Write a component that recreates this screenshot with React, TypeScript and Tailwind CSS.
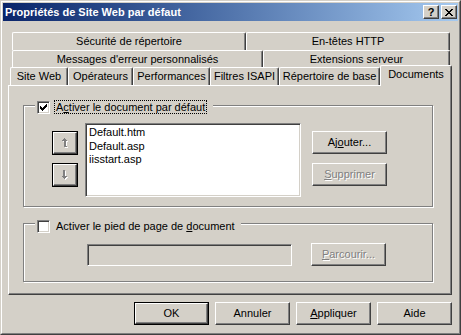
import type { ReactNode } from 'react';

type TabProps = { label: string; w: string; h?: string; selected?: boolean };

function Tab({ label, w, selected = false }: TabProps) {
  return (
    <div
      className={`${w} ${
        selected ? 'h-[21px] -mb-px relative z-10 pb-[3px]' : 'h-[18px]'
      } flex items-center justify-center bg-[#d4d0c8] border-t border-l border-r border-t-white border-l-white border-r-[#404040] rounded-t-[2px] shadow-[inset_-1px_0_0_#808080] whitespace-nowrap`}
    >
      {label}
    </div>
  );
}

function Button({
  children,
  disabled = false,
  isDefault = false,
}: {
  children: ReactNode;
  disabled?: boolean;
  isDefault?: boolean;
}) {
  const text = disabled ? 'text-[#808080] [text-shadow:1px_1px_0_#ffffff]' : 'text-black';
  if (isDefault) {
    return (
      <div className="w-[75px] h-[23px] border border-black">
        <div
          className={`h-full flex items-center justify-center border border-t-white border-l-white border-r-[#404040] border-b-[#404040] shadow-[inset_-1px_-1px_0_#808080] ${text}`}
        >
          <span>{children}</span>
        </div>
      </div>
    );
  }
  return (
    <div
      className={`w-[75px] h-[23px] flex items-center justify-center border border-t-white border-l-white border-r-[#404040] border-b-[#404040] shadow-[inset_-1px_-1px_0_#808080] ${text}`}
    >
      <span>{children}</span>
    </div>
  );
}

function Checkbox({ checked }: { checked: boolean }) {
  return (
    <div className="w-[13px] h-[13px] shrink-0 bg-white border border-t-[#808080] border-l-[#808080] border-r-white border-b-white shadow-[inset_1px_1px_0_#404040,inset_-1px_-1px_0_#d4d0c8] flex items-center justify-center">
      {checked && (
        <svg width="7" height="7" viewBox="0 0 7 7" shapeRendering="crispEdges">
          <path
            d="M6 0h1v1h-1z M5 1h2v1h-2z M0 2h1v1h-1z M4 2h3v1h-3z M0 3h2v1h-2z M3 3h3v1h-3z M0 4h5v1h-5z M1 5h3v1h-3z M2 6h1v1h-1z"
            fill="#000"
          />
        </svg>
      )}
    </div>
  );
}

function ArrowButton({ down = false }: { down?: boolean }) {
  // grayed bitmap arrow (disabled)
  const up = 'M3 0h1v1h-1z M2 1h3v1h-3z M1 2h5v1h-5z M3 3h2v6h-2z M4 8h2v1h-2z';
  const dn = 'M2 0h2v1h-2z M2 1h2v6h-2z M1 6h5v1h-5z M2 7h3v1h-3z M3 8h1v1h-1z';
  const d = down ? dn : up;
  return (
    <div className="w-[26px] h-[24px] border border-black">
      <div className="h-full flex items-center justify-center border border-t-white border-l-white border-r-[#404040] border-b-[#404040] shadow-[inset_-1px_-1px_0_#808080]">
        <svg width="8" height="10" viewBox="0 0 8 10" shapeRendering="crispEdges">
          <path d={d} fill="#ffffff" transform="translate(1 1)" />
          <path d={d} fill="#808080" />
        </svg>
      </div>
    </div>
  );
}

function GroupBox({ h, children }: { h: string; children: ReactNode }) {
  return (
    <div
      className={`relative w-[410px] ${h} border border-[#808080] shadow-[inset_1px_1px_0_#ffffff,1px_1px_0_#ffffff]`}
    >
      {children}
    </div>
  );
}

export default function App() {
  return (
    <div className="w-[461px] h-[335px] bg-[#d4d0c8] border border-t-[#d4d0c8] border-l-[#d4d0c8] border-r-[#404040] border-b-[#404040] font-['Liberation_Sans',Arial,sans-serif] text-[11px] text-black select-none overflow-hidden">
      <div className="h-full border border-t-white border-l-white border-r-[#808080] border-b-[#808080] p-px flex flex-col">
        {/* title bar */}
        <div className="h-[18px] shrink-0 flex items-center bg-linear-to-r from-[#0a246a] to-[#a6caf0] pl-[2px] pr-[1px]">
          <span className="font-bold text-white text-[11px]">Propriétés de Site Web par défaut</span>
          <div className="ml-auto flex gap-[2px]">
            <div className="w-[16px] h-[14px] bg-[#d4d0c8] border border-t-white border-l-white border-r-[#404040] border-b-[#404040] shadow-[inset_-1px_-1px_0_#808080] flex items-center justify-center font-bold text-[11px] leading-none">
              ?
            </div>
            <div className="w-[16px] h-[14px] bg-[#d4d0c8] border border-t-white border-l-white border-r-[#404040] border-b-[#404040] shadow-[inset_-1px_-1px_0_#808080] flex items-center justify-center">
              <svg width="8" height="7" viewBox="0 0 8 7" shapeRendering="crispEdges">
                <path
                  d="M0 0h2v1h-2z M6 0h2v1h-2z M1 1h2v1h-2z M5 1h2v1h-2z M2 2h4v1h-4z M3 3h2v1h-2z M2 4h4v1h-4z M1 5h2v1h-2z M5 5h2v1h-2z M0 6h2v1h-2z M6 6h2v1h-2z"
                  fill="#000"
                />
              </svg>
            </div>
          </div>
        </div>

        {/* tabs */}
        <div className="mt-[11px] flex flex-col">
          <div className="ml-[9px] flex h-[18px]">
            <Tab label="Sécurité de répertoire" w="w-[234px]" />
            <Tab label="En-têtes HTTP" w="w-[204px]" />
          </div>
          <div className="ml-[9px] flex h-[17px] items-start">
            <Tab label="Messages d'erreur personnalisés" w="w-[251px]" />
            <Tab label="Extensions serveur" w="w-[187px]" />
          </div>
          <div className="ml-[7px] flex h-[18px] items-end">
            <Tab label="Site Web" w="w-[58px]" />
            <Tab label="Opérateurs" w="w-[65px]" />
            <Tab label="Performances" w="w-[77px]" />
            <Tab label="Filtres ISAPI" w="w-[69px]" />
            <Tab label="Répertoire de base" w="w-[101px]" />
            <Tab label="Documents" w="w-[72px]" selected />
          </div>

          {/* panel */}
          <div className="ml-[5px] w-[444px] h-[210px] border border-t-white border-l-white border-r-[#404040] border-b-[#404040] shadow-[inset_-1px_-1px_0_#808080] pt-[19px] pl-[14px] flex flex-col">
            <GroupBox h="h-[102px]">
              <div className="absolute top-[-6px] left-[11px] flex items-center bg-[#d4d0c8] pl-[2px] pr-[6px]">
                <Checkbox checked />
                <div className="ml-[4px] h-[14px] px-px flex items-center border border-dotted border-black">
                  <span>
                    A<span className="underline">c</span>tiver le document par défaut
                  </span>
                </div>
              </div>
              <div className="flex items-start">
                <div className="ml-[28px] mt-[25px] flex flex-col gap-[8px]">
                  <ArrowButton />
                  <ArrowButton down />
                </div>
                <div className="ml-[7px] mt-[17px] w-[216px] h-[74px] bg-white border border-t-[#808080] border-l-[#808080] border-r-white border-b-white shadow-[inset_1px_1px_0_#404040,inset_-1px_-1px_0_#d4d0c8] pt-[2px] pl-[3px] leading-[13.5px]">
                  <div>Default.htm</div>
                  <div>Default.asp</div>
                  <div>iisstart.asp</div>
                </div>
                <div className="ml-[11px] mt-[25px] flex flex-col gap-[9px]">
                  <Button>
                    Aj<span className="underline">o</span>uter...
                  </Button>
                  <Button disabled>
                    <span className="underline">S</span>upprimer
                  </Button>
                </div>
              </div>
            </GroupBox>

            <div className="mt-[16px]">
              <GroupBox h="h-[59px]">
                <div className="absolute top-[-5px] left-[11px] flex items-center bg-[#d4d0c8] pl-[2px] pr-[5px]">
                  <Checkbox checked={false} />
                  <div className="ml-[5px] h-[14px] px-px flex items-center">
                    <span>
                      Activer le pied de page de <span className="underline">d</span>ocument
                    </span>
                  </div>
                </div>
                <div className="flex items-start">
                  <div className="ml-[63px] mt-[20px] w-[205px] h-[22px] bg-[#d4d0c8] border border-t-[#808080] border-l-[#808080] border-r-white border-b-white shadow-[inset_1px_1px_0_#404040,inset_-1px_-1px_0_#d4d0c8]" />
                  <div className="ml-[19px] mt-[19px]">
                    <Button disabled>
                      <span className="underline">P</span>arcourir...
                    </Button>
                  </div>
                </div>
              </GroupBox>
            </div>
          </div>

          {/* dialog buttons */}
          <div className="mt-[7px] pr-[6px] flex justify-end gap-[6px]">
            <Button isDefault>OK</Button>
            <Button>Annuler</Button>
            <Button>
              <span className="underline">A</span>ppliquer
            </Button>
            <Button>Aide</Button>
          </div>
        </div>
      </div>
    </div>
  );
}
